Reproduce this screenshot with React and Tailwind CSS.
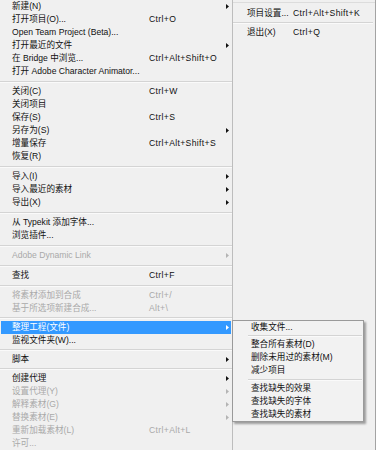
import React from "react";

const FONT = { fontFamily: '"Liberation Sans", "Noto Sans CJK SC", sans-serif' };

function Arrow({ color }) {
  return (
    <svg width="3" height="5" viewBox="0 0 3 5" className="shrink-0">
      <path d="M0 0L3 2.5L0 5Z" fill={color} />
    </svg>
  );
}

function Row({ label, shortcut, arrow, disabled, active }) {
  const color = active ? "text-white" : disabled ? "text-[#a9a9a9]" : "text-[#111111]";
  const arrowColor = active ? "#ffffff" : disabled ? "#b4b4b4" : "#111111";
  return (
    <div
      className={`flex items-center h-[13px] leading-[13px] pl-[11px] pr-[2px] ${color} ${
        active ? "bg-[#3399ff]" : ""
      }`}
    >
      <div className="w-[137px] shrink-0 whitespace-nowrap">{label}</div>
      <div className="flex-1 whitespace-nowrap tracking-[0.35px]">{shortcut}</div>
      {arrow ? <Arrow color={arrowColor} /> : null}
    </div>
  );
}

function Sep({ h }) {
  return (
    <div className={`${h === 6 ? "h-[6px] pt-[2px]" : "h-[7px] pt-[3px]"} -mx-[1px]`}>
      <div className="h-[1px] bg-[#d4d4d4]" />
      <div className="h-[1px] bg-[#fafafa]" />
    </div>
  );
}

export default function App() {
  return (
    <div
      className="relative w-[376px] h-[450px] overflow-hidden flex bg-[#f0f0f0] text-[8.6px]"
      style={FONT}
    >
      {/* main menu */}
      <div className="w-[233px] shrink-0 border-r border-[#bdbdbd] px-[1px] flex flex-col">
        <Row label="新建(N)" arrow />
        <Row label="打开项目(O)..." shortcut="Ctrl+O" />
        <Row label="Open Team Project (Beta)..." />
        <Row label="打开最近的文件" arrow />
        <Row label="在 Bridge 中浏览..." shortcut="Ctrl+Alt+Shift+O" />
        <Row label="打开 Adobe Character Animator..." />
        <Sep />
        <Row label="关闭(C)" shortcut="Ctrl+W" />
        <Row label="关闭项目" />
        <Row label="保存(S)" shortcut="Ctrl+S" />
        <Row label="另存为(S)" arrow />
        <Row label="增量保存" shortcut="Ctrl+Alt+Shift+S" />
        <Row label="恢复(R)" />
        <Sep />
        <Row label="导入(I)" arrow />
        <Row label="导入最近的素材" arrow />
        <Row label="导出(X)" arrow />
        <Sep />
        <Row label="从 Typekit 添加字体..." />
        <Row label="浏览插件..." />
        <Sep />
        <Row label="Adobe Dynamic Link" arrow disabled />
        <Sep />
        <Row label="查找" shortcut="Ctrl+F" />
        <Sep />
        <Row label="将素材添加到合成" shortcut="Ctrl+/" disabled />
        <Row label="基于所选项新建合成..." shortcut="Alt+\" disabled />
        <Sep h={6} />
        <Row label="整理工程(文件)" arrow active />
        <Row label="监视文件夹(W)..." />
        <Sep h={6} />
        <Row label="脚本" arrow />
        <Sep h={6} />
        <Row label="创建代理" arrow />
        <Row label="设置代理(Y)" arrow disabled />
        <Row label="解释素材(G)" arrow disabled />
        <Row label="替换素材(E)" arrow disabled />
        <Row label="重新加载素材(L)" shortcut="Ctrl+Alt+L" disabled />
        <Row label="许可..." disabled />
      </div>

      {/* right column */}
      <div className="flex-1 border-r border-[#a3a3a3] flex flex-col">
        <div className="mt-[2px] border-t border-[#dcdcdc] pt-[4px]">
          <div className="flex items-center h-[13px] leading-[13px] pl-[14px] text-[#111111]">
            <div className="w-[46px] shrink-0 whitespace-nowrap">项目设置...</div>
            <div className="whitespace-nowrap tracking-[0.35px]">Ctrl+Alt+Shift+K</div>
          </div>
          <div className="h-[6px] pt-[2px] mr-[2px]">
            <div className="h-[1px] bg-[#d4d4d4]" />
            <div className="h-[1px] bg-[#fafafa]" />
          </div>
          <div className="flex items-center h-[13px] leading-[13px] pl-[14px] text-[#111111]">
            <div className="w-[46px] shrink-0 whitespace-nowrap">退出(X)</div>
            <div className="whitespace-nowrap tracking-[0.35px]">Ctrl+Q</div>
          </div>
        </div>
      </div>

      {/* submenu */}
      <div className="absolute left-[232px] top-[320px] w-[132px] border border-[#9a9a9a] bg-[#f2f2f2] shadow-[2px_2px_2px_rgba(0,0,0,0.35)] text-[#111111]">
        <div className="h-[13px] leading-[13px] pl-[18px] whitespace-nowrap">收集文件...</div>
        <div className="h-[4px] pt-[1px] ml-[15px] mr-[1px]">
          <div className="h-[1px] bg-[#d4d4d4]" />
          <div className="h-[1px] bg-[#fafafa]" />
        </div>
        <div className="h-[13px] leading-[13px] pl-[18px] whitespace-nowrap">整合所有素材(D)</div>
        <div className="h-[13px] leading-[13px] pl-[18px] whitespace-nowrap">删除未用过的素材(M)</div>
        <div className="h-[13px] leading-[13px] pl-[18px] whitespace-nowrap">减少项目</div>
        <div className="h-[5px] pt-[2px] ml-[15px] mr-[1px]">
          <div className="h-[1px] bg-[#d4d4d4]" />
          <div className="h-[1px] bg-[#fafafa]" />
        </div>
        <div className="h-[13px] leading-[13px] pl-[18px] whitespace-nowrap">查找缺失的效果</div>
        <div className="h-[13px] leading-[13px] pl-[18px] whitespace-nowrap">查找缺失的字体</div>
        <div className="h-[13px] leading-[13px] pl-[18px] whitespace-nowrap">查找缺失的素材</div>
      </div>
    </div>
  );
}
